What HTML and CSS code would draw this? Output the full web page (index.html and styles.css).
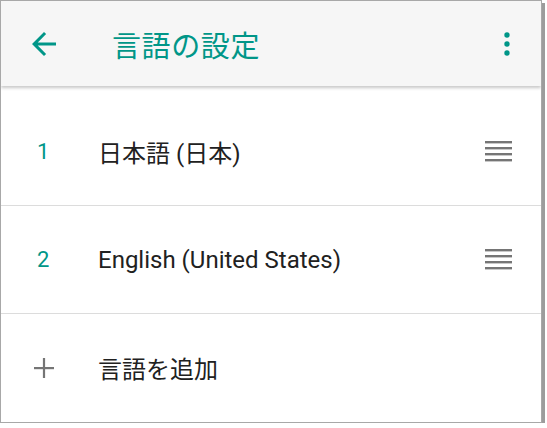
FILE: index.html
```html
<!DOCTYPE html>
<html lang="ja">
<head>
<meta charset="utf-8">
<link rel="stylesheet" href="styles.css">
</head>
<body>
<div class="frame">
  <header class="appbar">
    <svg class="back" width="36" height="36" viewBox="0 0 24 24"><path d="M20 11H7.83l5.59-5.59L12 4l-8 8 8 8 1.41-1.41L7.83 13H20v-2z" fill="#009688"/></svg>
    <h1 class="title">言語の設定</h1>
    <svg class="more" width="8" height="24" viewBox="0 0 8 24"><circle cx="4" cy="3" r="2.7" fill="#009688"/><circle cx="4" cy="12" r="2.7" fill="#009688"/><circle cx="4" cy="21" r="2.7" fill="#009688"/></svg>
  </header>
  <ul class="list">
    <li class="row">
      <span class="num">1</span>
      <span class="label">日本語 (日本)</span>
      <svg class="handle" width="27" height="22" viewBox="0 0 27 22"><rect x="0" y="0" width="27" height="2.4" fill="#757575"/><rect x="0" y="6" width="27" height="2.4" fill="#757575"/><rect x="0" y="12" width="27" height="2.4" fill="#757575"/><rect x="0" y="18" width="27" height="2.4" fill="#757575"/></svg>
    </li>
    <li class="row">
      <span class="num">2</span>
      <span class="label">English (United States)</span>
      <svg class="handle" width="27" height="22" viewBox="0 0 27 22"><rect x="0" y="0" width="27" height="2.4" fill="#757575"/><rect x="0" y="6" width="27" height="2.4" fill="#757575"/><rect x="0" y="12" width="27" height="2.4" fill="#757575"/><rect x="0" y="18" width="27" height="2.4" fill="#757575"/></svg>
    </li>
    <li class="row add">
      <svg class="plus" width="20" height="20" viewBox="0 0 20 20"><rect x="0" y="9" width="20" height="2.2" fill="#757575"/><rect x="8.9" y="0" width="2.2" height="20" fill="#757575"/></svg>
      <span class="label">言語を追加</span>
    </li>
  </ul>
</div>
</body>
</html>
```

FILE: styles.css
```css
html, body {
  margin: 0;
  padding: 0;
  background: #ffffff;
}
body {
  font-family: Roboto, "Noto Sans CJK JP", sans-serif;
}
.frame {
  width: 540px;
  height: 421px;
  border: 1px solid #a8a8a8;
  box-shadow: 3px 3px 0 #9c9c9c;
  background: #ffffff;
  overflow: hidden;
  display: flex;
  flex-direction: column;
}
.appbar {
  height: 85px;
  flex: none;
  background: #f6f6f6;
  display: flex;
  align-items: center;
  box-shadow: 0 2px 3px rgba(0,0,0,0.22);
  position: relative;
  z-index: 1;
}
.back {
  margin-left: 25px;
}
.title {
  margin: 0 0 0 50px;
  font-size: 29px;
  font-weight: 400;
  color: #009688;
  flex: 1;
  letter-spacing: 0.6px;
}
.more {
  margin-right: 30px;
}
.list {
  list-style: none;
  margin: 0;
  padding: 12px 0 0;
}
.row {
  height: 107px;
  display: flex;
  align-items: center;
  border-bottom: 1px solid #dcdcdc;
}
.row.add {
  border-bottom: none;
}
.num {
  width: 97px;
  padding-left: 36px;
  box-sizing: border-box;
  font-size: 22px;
  color: #009688;
}
.label {
  flex: 1;
  font-size: 24px;
  color: #212121;
}
.handle {
  margin-right: 29px;
}
.plus {
  margin-left: 33px;
  margin-right: 44px;
}
```
